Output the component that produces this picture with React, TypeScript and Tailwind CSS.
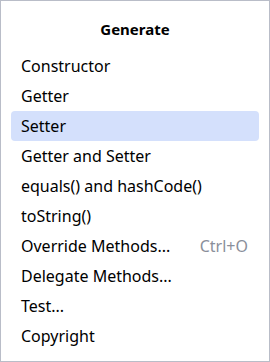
import React from "react";

const items: { label: string; shortcut?: string; active?: boolean }[] = [
  { label: "Constructor" },
  { label: "Getter" },
  { label: "Setter", active: true },
  { label: "Getter and Setter" },
  { label: "equals() and hashCode()" },
  { label: "toString()" },
  { label: "Override Methods...", shortcut: "Ctrl+O" },
  { label: "Delegate Methods..." },
  { label: "Test..." },
  { label: "Copyright" },
];

export default function App() {
  return (
    <div
      className="w-[270px] h-[362px] bg-white border border-[#b9bdc8] flex flex-col text-[#000000]"
      style={{ fontFamily: '"Noto Sans", "Open Sans", sans-serif' }}
    >
      <div className="h-[50px] flex items-center justify-center pt-[6px] text-[15px] font-bold">
        Generate
      </div>
      <div className="flex flex-col px-[10px]">
        {items.map((it) => (
          <div
            key={it.label}
            className={
              "h-[30px] flex items-center pl-[10px] pr-[11px] rounded-[4px] text-[16px] " +
              (it.active ? "bg-[#d4e0fc]" : "")
            }
          >
            <span className="flex-1">{it.label}</span>
            {it.shortcut && <span className="text-[#8a8f9b]">{it.shortcut}</span>}
          </div>
        ))}
      </div>
    </div>
  );
}
